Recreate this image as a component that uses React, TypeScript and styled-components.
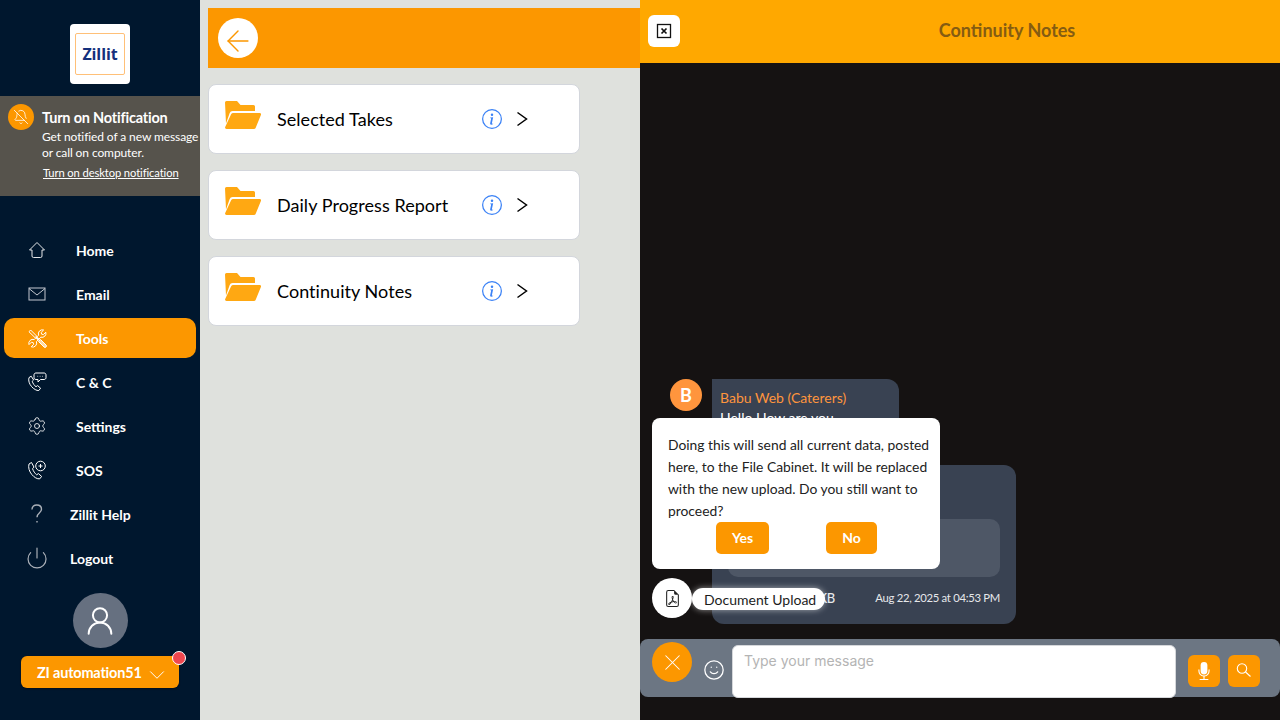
import styled, { createGlobalStyle } from "styled-components";
import { ArrowLeft, BellOff, ChevronDown, Power, Settings, Smile, UserRound, X } from "lucide-react";
import { BsFileEarmarkPdf, BsInfoCircle, BsMicFill } from "react-icons/bs";
import type { ReactNode } from "react";

const GlobalStyle = createGlobalStyle`
  html, body {
    margin: 0;
    padding: 0;
    overflow: hidden;
  }

  body {
    font-family: Lato, "Open Sans", sans-serif;
  }

  * {
    box-sizing: border-box;
  }
`;

const Page = styled.div`
  width: 1280px;
  height: 720px;
  display: flex;
  background: #dfe1dd;
  overflow: hidden;
`;

const Sidebar = styled.aside`
  width: 200px;
  flex-shrink: 0;
  display: flex;
  flex-direction: column;
  align-items: center;
  padding-top: 24px;
  background: #00172e;
  color: #fff;
`;

const LogoCard = styled.div`
  width: 60px;
  height: 60px;
  padding: 9px 5px;
  background: #fff;
  border-radius: 4px;
`;

const LogoFrame = styled.div`
  height: 100%;
  display: flex;
  align-items: center;
  justify-content: center;
  border: 1px solid #ffc078;
  border-radius: 2px;
  color: #14307c;
  font-family: "Open Sans", sans-serif;
  font-size: 16px;
  font-weight: 700;
  letter-spacing: -0.1px;
`;

const Banner = styled.div`
  width: 100%;
  height: 100px;
  margin-top: 12px;
  padding: 8px 0 0 8px;
  display: flex;
  gap: 8px;
  background: #56534c;
`;

const BellBadge = styled.div`
  width: 26px;
  height: 26px;
  flex-shrink: 0;
  display: flex;
  align-items: center;
  justify-content: center;
  border-radius: 50%;
  background: #fc9700;
`;

const BannerBody = styled.div`
  display: flex;
  flex-direction: column;
  white-space: nowrap;
`;

const BannerTitle = styled.div`
  margin: 4px 0 1px;
  font-size: 14.5px;
  font-weight: 700;
  line-height: 20px;
  letter-spacing: -0.2px;
`;

const BannerText = styled.div`
  font-size: 12px;
  line-height: 16px;
  letter-spacing: -0.1px;
`;

const BannerLink = styled.a`
  margin: 4px 0 0 1px;
  color: #fff;
  font-size: 11.2px;
  line-height: 16px;
  letter-spacing: -0.1px;
  text-decoration: underline;
`;

const Nav = styled.nav`
  width: 100%;
  margin-top: 34px;
  padding: 0 4px;
  display: flex;
  flex-direction: column;
  gap: 4px;
`;

const NavItem = styled.div<{ $active?: boolean; $tight?: boolean }>`
  height: 40px;
  padding-left: 20px;
  display: flex;
  align-items: center;
  gap: ${({ $tight }) => ($tight ? "20px" : "26px")};
  border-radius: 10px;
  background: ${({ $active }) => ($active ? "#fc9700" : "transparent")};
  color: #fff;
  font-size: 14px;
  font-weight: 700;
`;

const NavIcon = styled.span`
  width: 26px;
  height: 26px;
  display: flex;
  align-items: center;
  justify-content: center;
`;

const Avatar = styled.div`
  width: 55px;
  height: 55px;
  margin-top: 15px;
  display: flex;
  align-items: center;
  justify-content: center;
  border-radius: 50%;
  background: #667080;
`;

const UserButton = styled.div`
  position: relative;
  width: 158px;
  height: 32px;
  margin-top: 8px;
  padding-left: 16px;
  display: flex;
  align-items: center;
  border-radius: 6px;
  background: #fc9700;
  box-shadow: 0 1px 2px rgba(0, 0, 0, 0.4);
  font-size: 14.5px;
  font-weight: 700;
  letter-spacing: -0.2px;
`;

const UserChevron = styled(ChevronDown)`
  margin: 5px 0 0 2px;
`;

const RedDot = styled.span`
  position: absolute;
  top: -5px;
  right: -7px;
  width: 14px;
  height: 14px;
  border: 1px solid #fff;
  border-radius: 50%;
  background: #f0474f;
`;

const Main = styled.main`
  width: 440px;
  flex-shrink: 0;
  padding: 8px 0 0 8px;
`;

const MainHeader = styled.header`
  height: 60px;
  padding-left: 10px;
  display: flex;
  align-items: center;
  background: #fc9700;
`;

const BackButton = styled.div`
  width: 40px;
  height: 40px;
  padding-top: 5px;
  display: flex;
  align-items: center;
  justify-content: center;
  border-radius: 50%;
  background: #fff;
  color: #fc9700;
`;

const FolderList = styled.div`
  width: 372px;
  margin-top: 16px;
  display: flex;
  flex-direction: column;
  gap: 16px;
`;

const FolderCard = styled.div`
  height: 70px;
  padding: 0 51px 0 16px;
  display: flex;
  align-items: center;
  border: 1px solid #d3d6dc;
  border-radius: 8px;
  background: #fff;
  color: #000;
`;

const FolderName = styled.div`
  margin-left: 16px;
  flex: 1;
  font-size: 18px;
  letter-spacing: 0.05px;
`;

const FolderIcon = styled.svg`
  margin-bottom: 8px;
`;

const InfoIcon = styled(BsInfoCircle)`
  margin-right: 14px;
  color: #3b82f6;
`;

const Panel = styled.section`
  position: relative;
  width: 640px;
  flex-shrink: 0;
  display: flex;
  flex-direction: column;
  background: #151212;
`;

const PanelHeader = styled.header`
  height: 63px;
  padding: 0 0 2px 8px;
  display: flex;
  align-items: center;
  background: #ffa800;
`;

const CloseBox = styled.div`
  width: 32px;
  height: 32px;
  display: flex;
  align-items: center;
  justify-content: center;
  border-radius: 6px;
  background: #fff;
`;

const PanelTitle = styled.h1`
  flex: 1;
  margin: 0;
  padding: 0 0 2px 54px;
  color: #855c12;
  font-size: 18px;
  font-weight: 700;
  text-align: center;
`;

const Messages = styled.div`
  flex: 1;
  padding: 0 0 15px 30px;
  display: flex;
  flex-direction: column;
  justify-content: flex-end;
  gap: 16px;
`;

const MessageRow = styled.div`
  display: flex;
  gap: 10px;
`;

const Initial = styled.div`
  width: 32px;
  height: 32px;
  display: flex;
  align-items: center;
  justify-content: center;
  border-radius: 50%;
  background: #ff953d;
  color: #fff;
  font-size: 18px;
  font-weight: 700;
`;

const Bubble = styled.div<{ $wide?: boolean }>`
  width: ${({ $wide }) => ($wide ? "304px" : "187px")};
  height: ${({ $wide }) => ($wide ? "159px" : "70px")};
  margin-left: ${({ $wide }) => ($wide ? "42px" : "0")};
  padding: ${({ $wide }) => ($wide ? "54px 16px 0" : "10px 8px")};
  border-radius: 0 12px 12px 12px;
  background: #394252;
  color: #fff;
`;

const Sender = styled.div`
  color: #ff953d;
  font-size: 14px;
  line-height: 18px;
`;

const MessageText = styled.div`
  margin-top: 2px;
  font-size: 14px;
  line-height: 18px;
`;

const Attachment = styled.div`
  height: 58px;
  border-radius: 10px;
  background: #4e5766;
`;

const BubbleFooter = styled.div`
  margin-top: 13px;
  display: flex;
  align-items: center;
  justify-content: space-between;
  color: #e6e8eb;
  font-size: 11.3px;
  line-height: 16px;
  letter-spacing: -0.3px;
`;

const FileSize = styled.span`
  width: 107px;
  font-size: 13px;
  font-weight: 500;
  text-align: right;
`;

const Composer = styled.div`
  height: 58px;
  margin-bottom: 23px;
  padding: 6px 20px 0 92px;
  display: flex;
  align-items: flex-start;
  border-radius: 8px;
  background: #6c7683;
`;

const MessageInput = styled.textarea`
  width: 444px;
  height: 53px;
  flex-shrink: 0;
  padding: 7px 11px;
  border: 1px solid #d5d7da;
  border-radius: 6px;
  background: #fff;
  font-family: Inter, sans-serif;
  font-size: 14px;
  line-height: 16px;
  resize: none;
  outline: none;

  &::placeholder {
    color: #b4b4b4;
  }
`;

const SquareAction = styled.div`
  width: 32px;
  height: 32px;
  margin: 10px 0 0 8px;
  display: flex;
  align-items: center;
  justify-content: center;
  border-radius: 6px;
  background: #fc9700;
  color: #fff;

  &:first-of-type {
    margin-left: 12px;
  }
`;

const SmileSlot = styled.span`
  position: absolute;
  left: 63px;
  top: 659px;
  color: #fff;
  display: flex;
`;

const CloseFab = styled.div`
  position: absolute;
  left: 12px;
  top: 642px;
  width: 40px;
  height: 40px;
  display: flex;
  align-items: center;
  justify-content: center;
  border-radius: 50%;
  background: #fc9700;
  color: #fff;
`;

const DocFab = styled.div`
  position: absolute;
  left: 12px;
  top: 578px;
  width: 40px;
  height: 40px;
  display: flex;
  align-items: center;
  justify-content: center;
  border-radius: 50%;
  background: #fff;
  color: #222;
`;

const DocTip = styled.div`
  position: absolute;
  left: 52px;
  top: 588px;
  height: 22px;
  padding: 0 9px 0 12px;
  display: flex;
  align-items: center;
  border-radius: 11px;
  background: #fff;
  box-shadow: 0 0 6px rgba(255, 255, 255, 0.55);
  color: #1c1c1c;
  font-size: 14px;
  white-space: nowrap;
`;

const Dialog = styled.div`
  position: absolute;
  left: 12px;
  top: 418px;
  width: 288px;
  height: 151px;
  padding: 16px 4px 0 16px;
  border-radius: 8px;
  background: #fff;
`;

const DialogText = styled.p`
  margin: 0;
  color: #222;
  font-size: 13.85px;
  line-height: 22px;
`;

const DialogActions = styled.div`
  display: flex;
  padding-left: 48px;
  gap: 57px;
`;

const DialogButton = styled.div`
  height: 32px;
  padding: 0 16px 1px;
  display: flex;
  align-items: center;
  border-radius: 5px;
  background: #fc9700;
  color: #fff;
  font-size: 14px;
  font-weight: 700;
`;

const HomeGlyph = () => (
  <svg width="18" height="18" viewBox="0 0 18 18" fill="none" stroke="#e6e8ea" strokeWidth="1">
    <path d="M9 1.500 1.500 9H4v6a1.500 1.500 0 0 0 1.500 1.500h7A1.500 1.500 0 0 0 14 15V9h2.500z" />
  </svg>
);

const MailGlyph = () => (
  <svg width="18" height="14" viewBox="0 0 18 14" fill="none" stroke="#c3c8cf" strokeWidth="1">
    <rect x="1" y="1" width="16" height="12" />
    <path d="M1 1.500 9 8l8-6.500" />
  </svg>
);

const ToolsGlyph = () => (
  <svg width="19" height="19" viewBox="0 0 19 19" fill="none" stroke="#fff" strokeWidth="1">
    <path d="M17.800 3.200 15.400 5.600 13.600 5.200 13.200 3.400 15.600 1A4 4 0 0 0 10.600 6.200L6.200 10.600A4 4 0 0 0 1 15.600L3.400 13.200 5.200 13.600 5.600 15.400 3.200 17.800A4 4 0 0 0 8.400 12.600L12.800 8.200A4 4 0 0 0 17.800 3.200Z" />
    <path d="M1 2.800 2.600 1 8.600 7 7 8.600Z" />
    <path d="M8 8 11 11" strokeWidth="2" />
    <path d="M10.500 12.500 12.500 10.500 18 16A1.400 1.400 0 0 1 16 18Z" fill="#ffd9a0" />
  </svg>
);

const CallChatGlyph = () => (
  <svg width="20" height="20" viewBox="0 0 20 20" fill="none" stroke="#fff" strokeWidth="1">
    <path d="M4.200 4.200 2 5.600c-.9 2.900.3 6.400 2.600 9 2.300 2.500 5 4.200 7.200 3.900l1.800-2.300-3-2.600-1.600 1.100C7.500 13.800 6 11.500 5.200 9.300l1.400-1.300z" />
    <path d="M9 1h8c1.300 0 2 .8 2 2v2.500c0 1.300-.8 2-2 2h-3.500L11 10V7.500H9c-1.300 0-2-.7-2-2V3c0-1.200.7-2 2-2z" />
    <path d="M10.500 4.300h.6M12.800 4.300h.6M15 4.300h.6" />
  </svg>
);

const SosGlyph = () => (
  <svg width="20" height="20" viewBox="0 0 20 20" fill="none" stroke="#fff" strokeWidth="1">
    <path d="M4.500 2.500 2 4c-1 3.500.3 7.500 2.800 10.500 2.400 2.800 5.400 4.800 8 4.300l1.800-2.400-3.200-2.800-1.700 1.200C7.900 13.600 6.300 11 5.500 8.600l1.500-1.400z" />
    <circle cx="13.500" cy="6" r="4.800" />
    <path d="M13.500 4v4M11.500 6h4" />
  </svg>
);

const HelpGlyph = () => (
  <svg width="20" height="22" viewBox="0 0 20 22" fill="none" stroke="#aab0b8" strokeWidth="1.400">
    <path d="M5 6.500C5 3.500 7.200 2 9.800 2c2.800 0 4.700 1.700 4.700 4.200 0 3.800-4.500 3.800-4.500 8" />
    <path d="M10 18v1.500" />
  </svg>
);

const BoxCross = () => (
  <svg width="16" height="16" viewBox="0 0 16 16" fill="none" stroke="#111" strokeWidth="1.300">
    <rect x="1.500" y="1.500" width="13" height="13" />
    <path d="M5.500 5.500l5 5M10.500 5.500l-5 5" strokeWidth="1.700" />
  </svg>
);

const FolderGlyph = () => (
  <FolderIcon width="36" height="28" viewBox="0 0 36 28" fill="#ffa812">
    <path d="M0 1.500A1.500 1.500 0 0 1 1.500 0H12l3.500 4h13A1.500 1.500 0 0 1 30 5.500V10H7.500a3 3 0 0 0-2.800 2L1 22.500z" />
    <path d="M6 13.500A2 2 0 0 1 8 12h26.500a1.500 1.500 0 0 1 1.400 2l-5.200 12.700a2 2 0 0 1-1.900 1.300H1.500A1.500 1.500 0 0 1 .2 26z" />
  </FolderIcon>
);

const ChevronGlyph = () => (
  <svg width="12" height="16" viewBox="0 0 12 16" fill="none" stroke="#000" strokeWidth="1.500">
    <path d="M1.500 1.500 10.500 8l-9 6.500" />
  </svg>
);

const SearchGlyph = () => (
  <svg width="16" height="16" viewBox="0 0 16 16" fill="none" stroke="#fff" strokeWidth="1.100">
    <circle cx="6" cy="5.500" r="4.700" />
    <path d="M9.500 9 14.500 13.500" />
  </svg>
);

const navItems: { label: string; icon: ReactNode; active?: boolean; tight?: boolean }[] = [
  { label: "Home", icon: <HomeGlyph /> },
  { label: "Email", icon: <MailGlyph /> },
  { label: "Tools", icon: <ToolsGlyph />, active: true },
  { label: "C & C", icon: <CallChatGlyph /> },
  { label: "Settings", icon: <Settings size={20} strokeWidth={1} color="#fff" /> },
  { label: "SOS", icon: <SosGlyph /> },
  { label: "Zillit Help", icon: <HelpGlyph />, tight: true },
  { label: "Logout", icon: <Power size={24} strokeWidth={1.2} color="#aab0b8" />, tight: true },
];

const folders = ["Selected Takes", "Daily Progress Report", "Continuity Notes"];

const App = () => {
  return (
    <>
      <GlobalStyle />
      <Page>
        <Sidebar>
          <LogoCard>
            <LogoFrame>Zillit</LogoFrame>
          </LogoCard>
          <Banner>
            <BellBadge>
              <BellOff size={16} strokeWidth={1.2} color="#fff" />
            </BellBadge>
            <BannerBody>
              <BannerTitle>Turn on Notification</BannerTitle>
              <BannerText>Get notified of a new message</BannerText>
              <BannerText>or call on computer.</BannerText>
              <BannerLink>Turn on desktop notification</BannerLink>
            </BannerBody>
          </Banner>
          <Nav>
            {navItems.map((item) => (
              <NavItem key={item.label} $active={item.active} $tight={item.tight}>
                <NavIcon>{item.icon}</NavIcon>
                {item.label}
              </NavItem>
            ))}
          </Nav>
          <Avatar>
            <UserRound size={34} strokeWidth={1.4} color="#fff" />
          </Avatar>
          <UserButton>
            ZI automation51
            <UserChevron size={26} strokeWidth={0.9} color="#fff" />
            <RedDot />
          </UserButton>
        </Sidebar>

        <Main>
          <MainHeader>
            <BackButton>
              <ArrowLeft size={34} strokeWidth={1} />
            </BackButton>
          </MainHeader>
          <FolderList>
            {folders.map((name) => (
              <FolderCard key={name}>
                <FolderGlyph />
                <FolderName>{name}</FolderName>
                <InfoIcon size={20} />
                <ChevronGlyph />
              </FolderCard>
            ))}
          </FolderList>
        </Main>

        <Panel>
          <PanelHeader>
            <CloseBox>
              <BoxCross />
            </CloseBox>
            <PanelTitle>Continuity Notes</PanelTitle>
          </PanelHeader>
          <Messages>
            <MessageRow>
              <Initial>B</Initial>
              <Bubble>
                <Sender>Babu Web (Caterers)</Sender>
                <MessageText>Hello How are you</MessageText>
              </Bubble>
            </MessageRow>
            <MessageRow>
              <Bubble $wide>
                <Attachment />
                <BubbleFooter>
                  <FileSize>0.12 KB</FileSize>
                  <span>Aug 22, 2025 at 04:53 PM</span>
                </BubbleFooter>
              </Bubble>
            </MessageRow>
          </Messages>
          <Composer>
            <MessageInput placeholder="Type your message" />
            <SquareAction>
              <BsMicFill size={18} />
            </SquareAction>
            <SquareAction>
              <SearchGlyph />
            </SquareAction>
          </Composer>
          <SmileSlot>
            <Smile size={22} strokeWidth={1.4} />
          </SmileSlot>
          <CloseFab>
            <X size={27} strokeWidth={0.9} />
          </CloseFab>
          <DocFab>
            <BsFileEarmarkPdf size={17} />
          </DocFab>
          <DocTip>Document Upload</DocTip>
          <Dialog>
            <DialogText>
              Doing this will send all current data, posted here, to the File Cabinet. It will be
              replaced with the new upload. Do you still want to proceed?
            </DialogText>
            <DialogActions>
              <DialogButton>Yes</DialogButton>
              <DialogButton>No</DialogButton>
            </DialogActions>
          </Dialog>
        </Panel>
      </Page>
    </>
  );
};

export default App;
